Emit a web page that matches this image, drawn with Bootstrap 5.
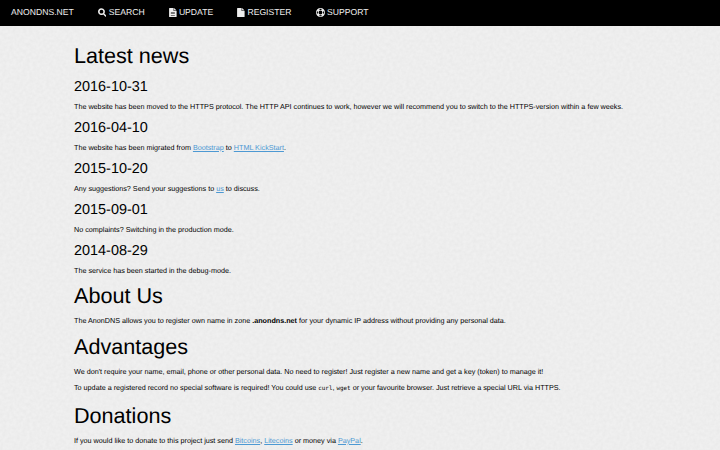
<!DOCTYPE html>
<html lang="en">
<head>
  <meta charset="UTF-8" />
  <title>AnonDNS</title>
  <meta name="viewport" content="width=device-width, initial-scale=1" />
  <!-- Bootstrap CSS -->
  <link
    href="https://cdn.jsdelivr.net/npm/bootstrap@5.3.3/dist/css/bootstrap.min.css"
    rel="stylesheet"
  />
  <style>
    body {
      font-family: "Liberation Sans", Arial, sans-serif;
      font-size: 7.21px;
      line-height: 11px;
      text-rendering: geometricPrecision;
      color: #000;
      background-color: #f0f0f0;
      /* fine paper grain */
      background-image: url("data:image/svg+xml,%3Csvg xmlns='http://www.w3.org/2000/svg' width='120' height='120'%3E%3Cfilter id='g' x='0' y='0' width='100%25' height='100%25'%3E%3CfeTurbulence type='fractalNoise' baseFrequency='.3' numOctaves='2' stitchTiles='stitch'/%3E%3CfeColorMatrix values='0 0 0 0 0 0 0 0 0 0 0 0 0 0 0 .04 0 0 0 -.01'/%3E%3C/filter%3E%3Crect width='120' height='120' filter='url(%23g)'/%3E%3C/svg%3E");
      overflow: hidden;
    }
    .site-bar {
      height: 26px;
      padding: 0 11px 1px;
      gap: 24.2px;
      font-size: 8.65px;
      background: #000;
    }
    .site-bar .nav-link {
      padding: 0;
      color: #eee;
      white-space: nowrap;
    }
    .site-bar svg {
      height: 9px;
      fill: #eee;
      margin-right: 2.3px;
    }
    .content {
      margin: 16px 74px 0;
      white-space: nowrap;
    }
    .content h1 {
      font-size: 21.6px;
      line-height: 27px;
      font-weight: 400;
      margin: 6.8px 0 6.1px;
    }
    .content h2 {
      font-size: 14.45px;
      line-height: 22px;
      font-weight: 400;
      margin: 0 0 3px;
    }
    .content h1 + h2 {
      margin-top: 7px;
    }
    .content p {
      margin: 0 0 4.9px;
    }
    .content p + p {
      margin-top: -.2px;
    }
    .content a {
      color: #4d99d3;
    }
    .content code {
      font-family: "DejaVu Sans Mono", monospace;
      font-size: 5.9px;
      color: #000;
    }
  </style>
</head>
<body>
  <nav class="site-bar d-flex align-items-center">
    <a class="nav-link" href="#">ANONDNS.NET</a>
    <a class="nav-link d-flex align-items-center" href="#">
      <svg width="8.5" viewBox="0 0 17 18"><path fill-rule="evenodd" d="M7 .5a6.8 6.8 0 1 0 3.4 12.6l4 4q1.1 1 2.1 0t0-2.1l-3.9-4A6.8 6.8 0 0 0 7 .5zm0 3a3.8 3.8 0 1 1 0 7.6 3.8 3.8 0 0 1 0-7.6z"/></svg>SEARCH
    </a>
    <a class="nav-link d-flex align-items-center" href="#">
      <svg width="7.7" viewBox="0 0 15 18"><path fill-rule="evenodd" d="M1 0h8v6h6v11q0 1-1 1H1q-1 0-1-1V1q0-1 1-1zm9 0 5 5h-5zM3.5 8v1.2h8V8zm0 3v1.2h8V11zm0 3v1.2h8V14z"/></svg>UPDATE
    </a>
    <a class="nav-link d-flex align-items-center" href="#">
      <svg width="7.7" viewBox="0 0 15 18"><path d="M1 0h8v6h6v11q0 1-1 1H1q-1 0-1-1V1q0-1 1-1zm9 0 5 5h-5z"/></svg>REGISTER
    </a>
    <a class="nav-link d-flex align-items-center" href="#">
      <svg width="9" viewBox="0 0 18 18"><path fill-rule="evenodd" d="M9 0a9 9 0 1 0 0 18A9 9 0 0 0 9 0zm0 5.2a3.8 3.8 0 1 1 0 7.6 3.8 3.8 0 0 1 0-7.6zM6.4 2.2Q9 1 11.6 2.2l-1.2 1.8Q9 3.5 7.6 4zM2.2 6.4l1.8 1.2Q3.5 9 4 10.4l-1.8 1.2Q1 9 2.2 6.4zm13.6 0Q17 9 15.8 11.6L14 10.4Q14.5 9 14 7.6zM7.6 14Q9 14.5 10.4 14l1.2 1.8Q9 17 6.4 15.8z"/></svg>SUPPORT
    </a>
  </nav>

  <main class="content">
    <h1>Latest news</h1>
    <h2>2016-10-31</h2>
    <p>The website has been moved to the HTTPS protocol. The HTTP API continues to work, however we will recommend you to switch to the HTTPS-version within a few weeks.</p>
    <h2>2016-04-10</h2>
    <p>The website has been migrated from <a href="#">Bootstrap</a> to <a href="#">HTML KickStart</a>.</p>
    <h2>2015-10-20</h2>
    <p>Any suggestions? Send your suggestions to <a href="#">us</a> to discuss.</p>
    <h2>2015-09-01</h2>
    <p>No complaints? Switching in the production mode.</p>
    <h2>2014-08-29</h2>
    <p>The service has been started in the debug-mode.</p>

    <h1>About Us</h1>
    <p>The AnonDNS allows you to register own name in zone <strong>.anondns.net</strong> for your dynamic IP address without providing any personal data.</p>

    <h1>Advantages</h1>
    <p>We don't require your name, email, phone or other personal data. No need to register! Just register a new name and get a key (token) to manage it!</p>
    <p>To update a registered record no special software is required! You could use <code>curl</code>, <code>wget</code> or your favourite browser. Just retrieve a special URL via HTTPS.</p>

    <h1>Donations</h1>
    <p>If you would like to donate to this project just send <a href="#">Bitcoins</a>, <a href="#">Litecoins</a> or money via <a href="#">PayPal</a>.</p>
  </main>

  <!-- Bootstrap JS -->
  <script src="https://cdn.jsdelivr.net/npm/bootstrap@5.3.3/dist/js/bootstrap.bundle.min.js"></script>
</body>
</html>
